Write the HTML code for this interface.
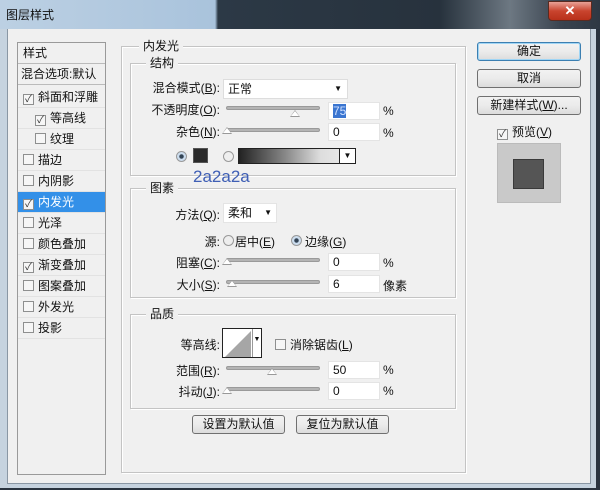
<!DOCTYPE html>
<html><head><meta charset="utf-8"><style>
*{box-sizing:border-box;margin:0;padding:0}
body{width:600px;height:490px;overflow:hidden;position:relative;background:#2a3440;font-family:"Liberation Sans","Noto Sans CJK SC",sans-serif;font-size:12px;color:#111}
.a{position:absolute}
.tb{left:0;top:0;width:600px;height:29px;background:linear-gradient(90deg,#bcd0e3 0,#a9c3dc 215px,#2c3946 218px,#27323d 440px,#6d7882 510px,#3a4450 560px,#2e3843 600px)}
.frame{left:0;top:29px;width:596px;height:459px;background:#c6d3df}
.bodyw{left:7px;top:29px;width:584px;height:455px;background:#f0f0f0;border-left:1px solid #8a97a4;border-right:1px solid #8a97a4;border-bottom:1px solid #8a97a4}
.close{left:548px;top:1px;width:44px;height:20px;background:linear-gradient(#e8a196,#c9442e 50%,#b8301a);border:1px solid #5a2a20;border-radius:0 0 4px 4px;color:#fff;font-weight:bold;text-align:center;line-height:18px;font-size:13px}
.fs{border:1px solid #c4c4c4;box-shadow:inset 1px 1px 0 #fff,1px 1px 0 #fff}
.lg{background:#f0f0f0;padding:0 4px;font-size:12px;line-height:14px}
.lp{left:17px;top:42px;width:89px;height:433px;border:1px solid #9a9a9a;background:#f0f0f0}
.li{position:absolute;left:0;width:87px;height:21px;line-height:21px;font-size:12px;border-bottom:1px solid #e2e2e2}
.cb{display:inline-block;width:11px;height:11px;border:1px solid #8e8f8f;background:#f6f6f6;vertical-align:-1px;margin-right:4px;font-size:10px;line-height:9px;text-align:center;color:#333}
.lbl{position:absolute;text-align:right;font-size:12px;margin-top:-3px}
.trk{position:absolute;height:4px;background:#b4b4b4;border:1px solid #9a9a9a;border-radius:2px}
.thumb{position:absolute;width:0;height:0;border-left:5px solid transparent;border-right:5px solid transparent;border-bottom:7px solid #999}
.thumb:after{content:"";position:absolute;left:-4px;top:1px;border-left:4px solid transparent;border-right:4px solid transparent;border-bottom:5px solid #fff}
.inp{position:absolute;height:18px;background:#fff;border:1px solid #e4e4e4;padding-left:4px;line-height:16px;font-size:12px}
.btn{position:absolute;height:19px;border:1px solid #707070;border-radius:3px;background:linear-gradient(#f2f2f2,#ebebeb 50%,#dcdcdc);text-align:center;line-height:17px;font-size:12px}
.rad{position:absolute;width:11px;height:11px;border-radius:50%;border:1px solid #999;background:#eee}
</style></head><body>
<div class="a frame"></div>
<div class="a tb"></div>
<div class="a" style="left:6px;top:6px;font-size:12px;color:#111">图层样式</div>
<div class="a close">✕</div>
<div class="a bodyw"></div>

<div class="a lp">
 <div class="li" style="top:0;padding-left:5px;border-bottom:1px solid #bbb">样式</div>
 <div class="li" style="top:21px;padding-left:3px;border-bottom:1px solid #bbb">混合选项:默认</div>
 <div class="li" style="top:44px;padding-left:5px"><span class="cb">✓</span>斜面和浮雕</div>
 <div class="li" style="top:65px;padding-left:17px"><span class="cb">✓</span>等高线</div>
 <div class="li" style="top:86px;padding-left:17px"><span class="cb"></span>纹理</div>
 <div class="li" style="top:107px;padding-left:5px"><span class="cb"></span>描边</div>
 <div class="li" style="top:128px;padding-left:5px"><span class="cb"></span>内阴影</div>
 <div class="li" style="top:149px;padding-left:5px;background:#3390e8;color:#fff"><span class="cb" style="color:#333">✓</span>内发光</div>
 <div class="li" style="top:170px;padding-left:5px"><span class="cb"></span>光泽</div>
 <div class="li" style="top:191px;padding-left:5px"><span class="cb"></span>颜色叠加</div>
 <div class="li" style="top:212px;padding-left:5px"><span class="cb">✓</span>渐变叠加</div>
 <div class="li" style="top:233px;padding-left:5px"><span class="cb"></span>图案叠加</div>
 <div class="li" style="top:254px;padding-left:5px"><span class="cb"></span>外发光</div>
 <div class="li" style="top:275px;padding-left:5px"><span class="cb"></span>投影</div>
</div>

<div class="a fs" style="left:121px;top:46px;width:345px;height:427px"></div>
<div class="a lg" style="left:139px;top:39px">内发光</div>

<div class="a fs" style="left:130px;top:63px;width:326px;height:113px"></div>
<div class="a lg" style="left:146px;top:56px">结构</div>
<div class="lbl" style="left:140px;top:82px;width:80px">混合模式(<u>B</u>):</div>
<div class="inp" style="left:223px;top:79px;width:125px;height:20px;line-height:18px;border-color:#ddd">正常<span style="position:absolute;right:5px;font-size:8px">▼</span></div>
<div class="lbl" style="left:140px;top:104px;width:80px">不透明度(<u>O</u>):</div>
<div class="trk" style="left:226px;top:106px;width:94px"></div><div class="thumb" style="left:290px;top:110px"></div>
<div class="inp" style="left:328px;top:102px;width:52px"><span style="background:#3a75d0;color:#cfe0ff">75</span></div>
<div class="a" style="left:383px;top:104px">%</div>
<div class="lbl" style="left:140px;top:126px;width:80px">杂色(<u>N</u>):</div>
<div class="trk" style="left:226px;top:128px;width:94px"></div><div class="thumb" style="left:222px;top:127px"></div>
<div class="inp" style="left:328px;top:123px;width:52px">0</div>
<div class="a" style="left:383px;top:126px">%</div>
<div class="rad" style="left:176px;top:151px;background:radial-gradient(#345 30%,#cde 40%)"></div>
<div class="a" style="left:193px;top:148px;width:15px;height:15px;background:#2a2a2a;border:1px solid #555"></div>
<div class="rad" style="left:223px;top:151px"></div>
<div class="a" style="left:238px;top:148px;width:118px;height:16px;border:1px solid #222;background:linear-gradient(90deg,#222,#888 40%,#ddd 70%,#eee)"><div style="position:absolute;right:0;top:0;width:16px;height:14px;background:#fff;border-left:1px solid #222;font-size:8px;text-align:center;line-height:14px">▼</div></div>
<div class="a" style="left:193px;top:167px;font-size:17px;color:#3f5fb5">2a2a2a</div>

<div class="a fs" style="left:130px;top:188px;width:326px;height:110px"></div>
<div class="a lg" style="left:146px;top:181px">图素</div>
<div class="lbl" style="left:140px;top:209px;width:80px">方法(<u>Q</u>):</div>
<div class="inp" style="left:223px;top:203px;width:54px;height:20px;line-height:18px">柔和<span style="position:absolute;right:4px;font-size:8px">▼</span></div>
<div class="lbl" style="left:140px;top:236px;width:80px">源:</div>
<div class="rad" style="left:223px;top:235px"></div><div class="a" style="left:235px;top:233px">居中(<u>E</u>)</div>
<div class="rad" style="left:291px;top:235px;background:radial-gradient(#345 30%,#cde 40%)"></div><div class="a" style="left:305px;top:233px">边缘(<u>G</u>)</div>
<div class="lbl" style="left:140px;top:257px;width:80px">阻塞(<u>C</u>):</div>
<div class="trk" style="left:226px;top:258px;width:94px"></div><div class="thumb" style="left:222px;top:258px"></div>
<div class="inp" style="left:328px;top:253px;width:52px">0</div><div class="a" style="left:383px;top:256px">%</div>
<div class="lbl" style="left:140px;top:279px;width:80px">大小(<u>S</u>):</div>
<div class="trk" style="left:226px;top:280px;width:94px"></div><div class="thumb" style="left:227px;top:280px"></div>
<div class="inp" style="left:328px;top:275px;width:52px">6</div><div class="a" style="left:383px;top:277px">像素</div>

<div class="a fs" style="left:130px;top:314px;width:326px;height:95px"></div>
<div class="a lg" style="left:146px;top:307px">品质</div>
<div class="lbl" style="left:140px;top:339px;width:80px">等高线:</div>
<div class="a" style="left:222px;top:328px;width:40px;height:30px;border:1px solid #222;background:#fff;overflow:hidden"><svg width="30" height="28" style="position:absolute;left:0;top:0"><polygon points="2,28 28,2 28,28" fill="#a6a6a6"/></svg><div style="position:absolute;right:0;top:0;width:9px;height:28px;border-left:1px solid #999;font-size:7px;text-align:center;line-height:22px">▼</div></div>
<div class="a" style="left:275px;top:336px"><span class="cb"></span>消除锯齿(<u>L</u>)</div>
<div class="lbl" style="left:140px;top:365px;width:80px">范围(<u>R</u>):</div>
<div class="trk" style="left:226px;top:366px;width:94px"></div><div class="thumb" style="left:267px;top:368px"></div>
<div class="inp" style="left:328px;top:361px;width:52px">50</div><div class="a" style="left:383px;top:363px">%</div>
<div class="lbl" style="left:140px;top:386px;width:80px">抖动(<u>J</u>):</div>
<div class="trk" style="left:226px;top:387px;width:94px"></div><div class="thumb" style="left:222px;top:387px"></div>
<div class="inp" style="left:328px;top:382px;width:52px">0</div><div class="a" style="left:383px;top:384px">%</div>

<div class="btn" style="left:192px;top:415px;width:93px">设置为默认值</div>
<div class="btn" style="left:296px;top:415px;width:93px">复位为默认值</div>

<div class="btn" style="left:477px;top:42px;width:104px;border-color:#3c7fb1;box-shadow:inset 0 0 0 1px #9fd5f5">确定</div>
<div class="btn" style="left:477px;top:69px;width:104px">取消</div>
<div class="btn" style="left:477px;top:96px;width:104px">新建样式(<u>W</u>)...</div>
<div class="a" style="left:497px;top:123px"><span class="cb">✓</span>预览(<u>V</u>)</div>
<div class="a" style="left:497px;top:143px;width:64px;height:60px;background:#c9c9c9;border:1px solid #bbb"></div>
<div class="a" style="left:513px;top:159px;width:31px;height:30px;background:#555;border:1px solid #3a3a3a"></div>
</body></html>
